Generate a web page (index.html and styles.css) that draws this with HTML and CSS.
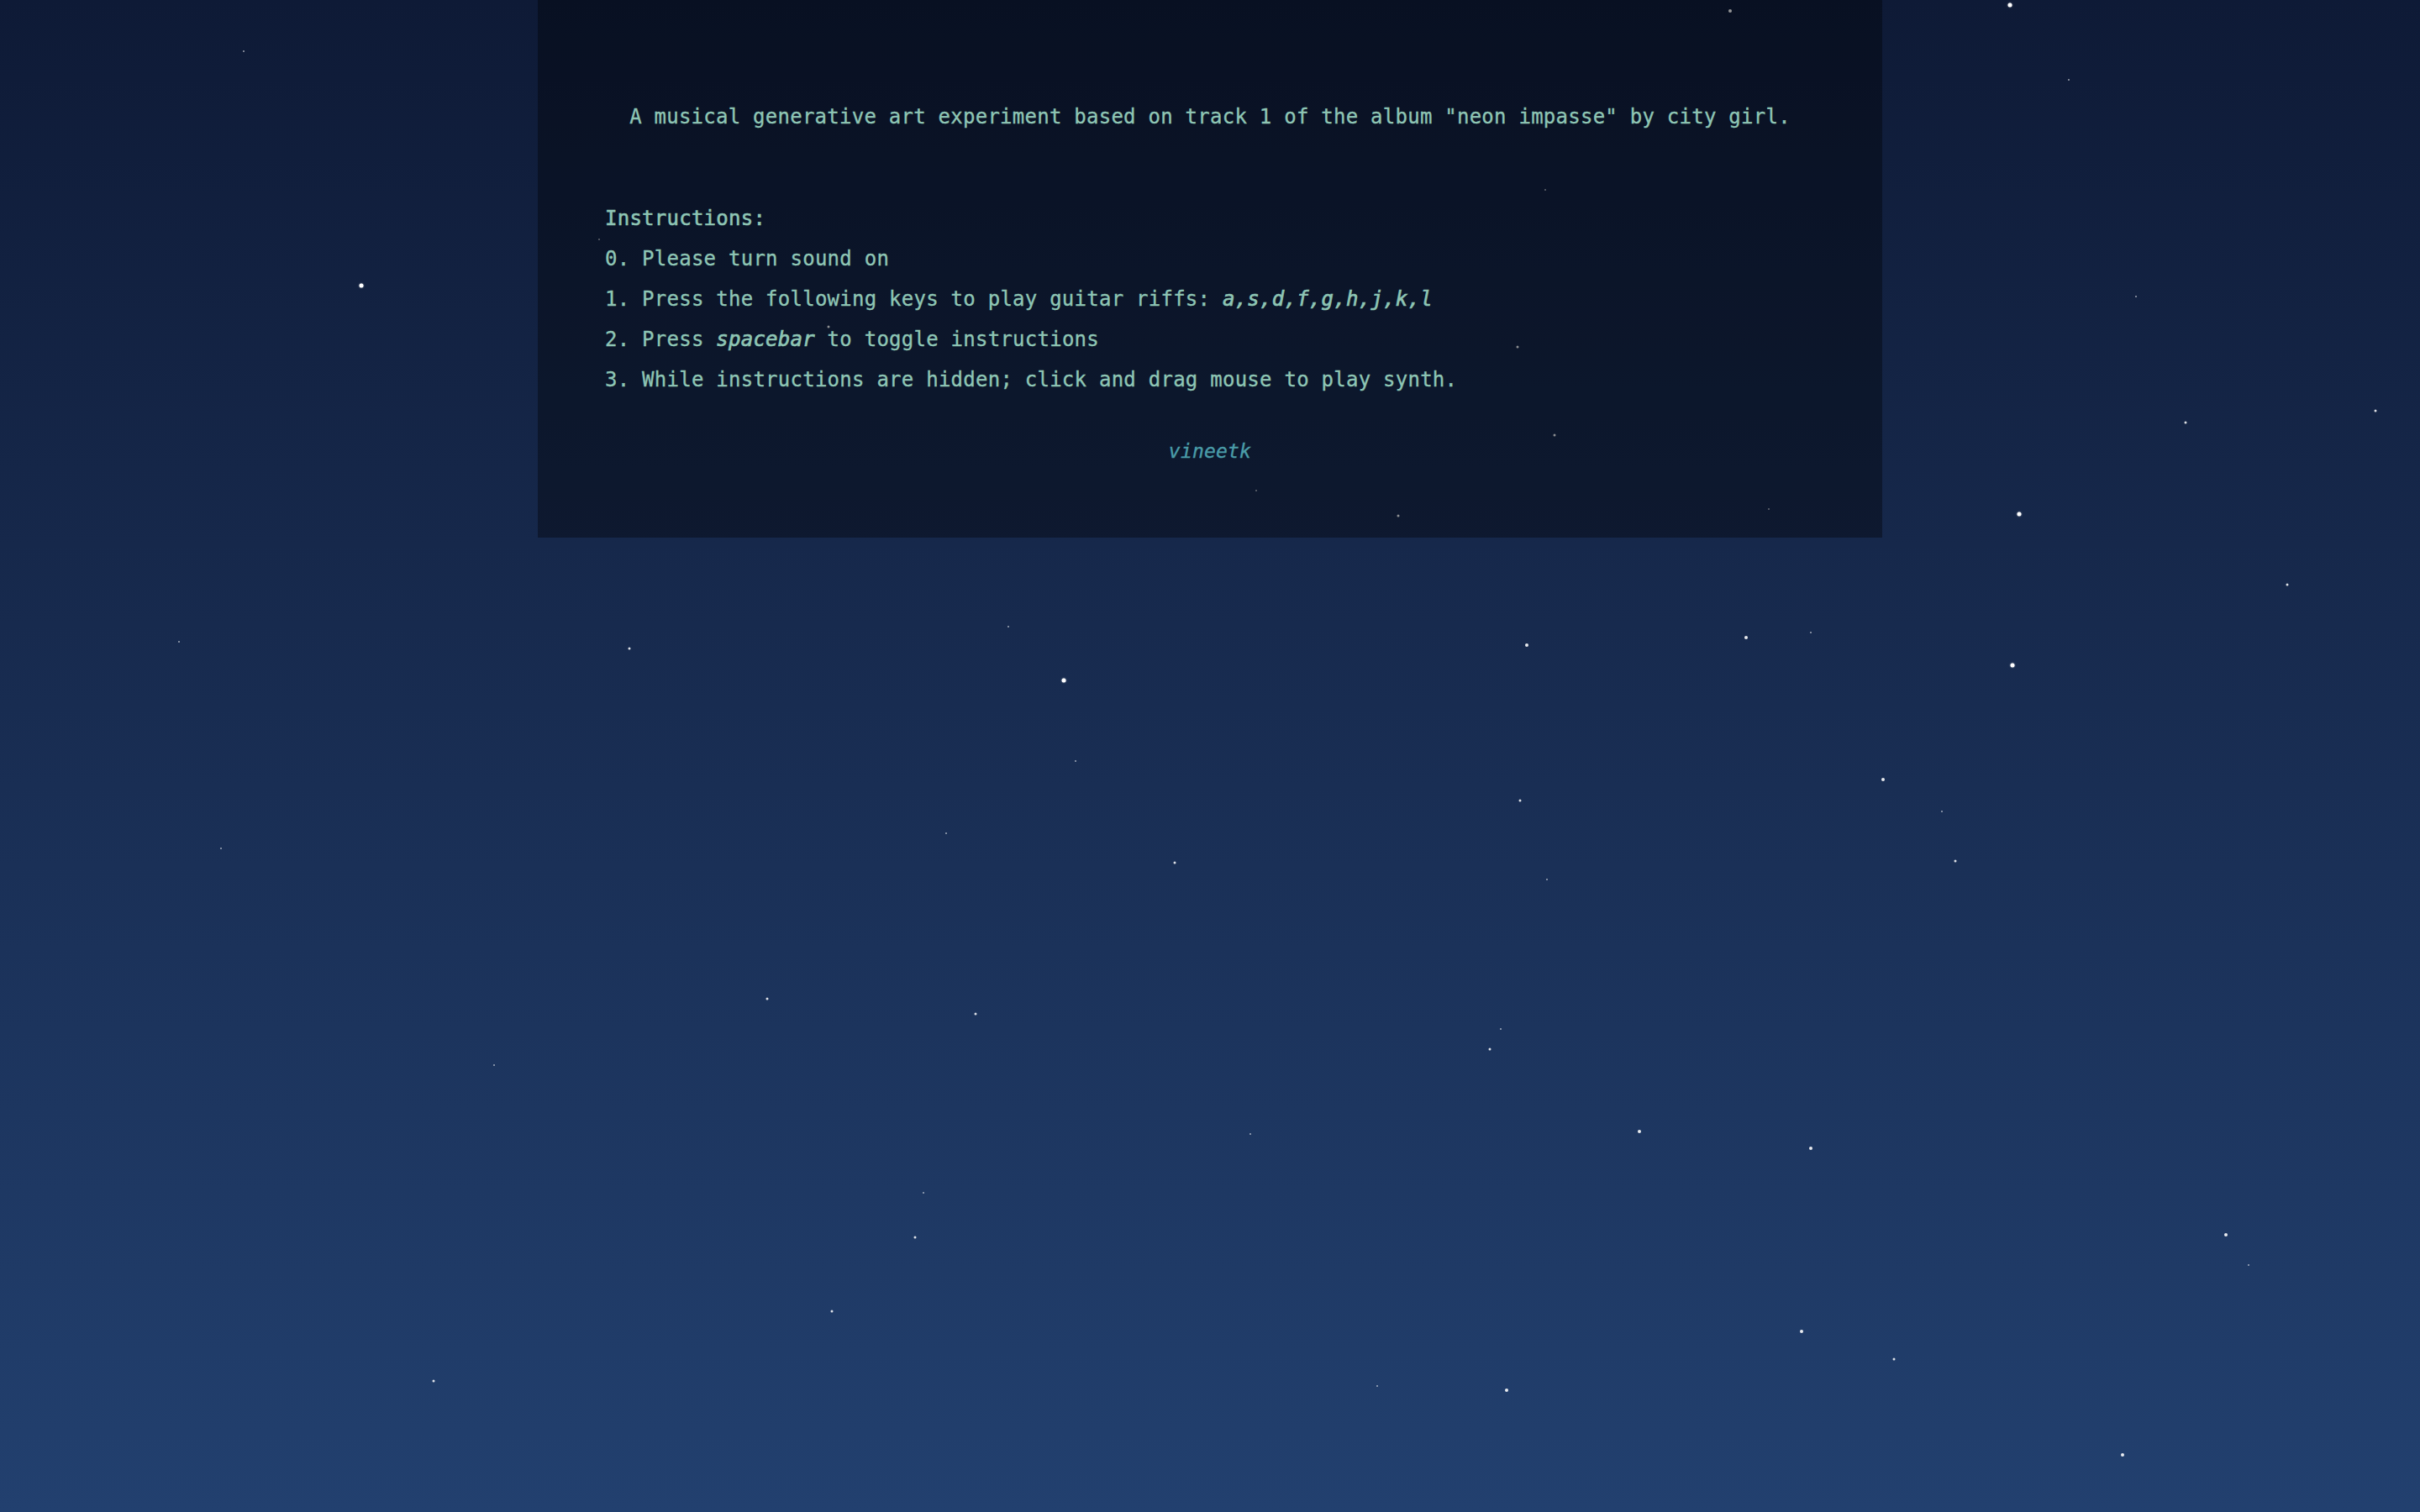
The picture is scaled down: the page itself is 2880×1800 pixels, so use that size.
FILE: index.html
```html
<!DOCTYPE html>
<html lang="en">
<head>
<meta charset="utf-8">
<title>neon impasse</title>
<link rel="stylesheet" href="styles.css">
</head>
<body>
<div class="sky">
  <span class="star t" style="left:290px;top:61px"></span>
  <span class="star b" style="left:430px;top:340px"></span>
  <span class="star m" style="left:2059px;top:13px"></span>
  <span class="star b" style="left:2392px;top:6px"></span>
  <span class="star t" style="left:2462px;top:95px"></span>
  <span class="star t" style="left:1839px;top:226px"></span>
  <span class="star t" style="left:713px;top:285px"></span>
  <span class="star s" style="left:986px;top:389px"></span>
  <span class="star s" style="left:1806px;top:413px"></span>
  <span class="star t" style="left:2542px;top:353px"></span>
  <span class="star s" style="left:1850px;top:518px"></span>
  <span class="star s" style="left:2601px;top:503px"></span>
  <span class="star s" style="left:2827px;top:489px"></span>
  <span class="star b" style="left:2403px;top:612px"></span>
  <span class="star s" style="left:1664px;top:614px"></span>
  <span class="star t" style="left:1495px;top:584px"></span>
  <span class="star t" style="left:2105px;top:606px"></span>
  <span class="star s" style="left:2722px;top:696px"></span>
  <span class="star t" style="left:213px;top:764px"></span>
  <span class="star s" style="left:749px;top:772px"></span>
  <span class="star t" style="left:1200px;top:746px"></span>
  <span class="star b" style="left:1266px;top:810px"></span>
  <span class="star m" style="left:1817px;top:768px"></span>
  <span class="star m" style="left:2078px;top:759px"></span>
  <span class="star t" style="left:2155px;top:753px"></span>
  <span class="star b" style="left:2395px;top:792px"></span>
  <span class="star t" style="left:1280px;top:906px"></span>
  <span class="star m" style="left:2241px;top:928px"></span>
  <span class="star t" style="left:2311px;top:966px"></span>
  <span class="star s" style="left:1809px;top:953px"></span>
  <span class="star t" style="left:263px;top:1010px"></span>
  <span class="star t" style="left:1126px;top:992px"></span>
  <span class="star s" style="left:1398px;top:1027px"></span>
  <span class="star s" style="left:2327px;top:1025px"></span>
  <span class="star t" style="left:1841px;top:1047px"></span>
  <span class="star s" style="left:913px;top:1189px"></span>
  <span class="star s" style="left:1161px;top:1207px"></span>
  <span class="star t" style="left:1786px;top:1225px"></span>
  <span class="star s" style="left:1773px;top:1249px"></span>
  <span class="star t" style="left:588px;top:1268px"></span>
  <span class="star t" style="left:1488px;top:1350px"></span>
  <span class="star m" style="left:1951px;top:1347px"></span>
  <span class="star m" style="left:2155px;top:1367px"></span>
  <span class="star t" style="left:1099px;top:1420px"></span>
  <span class="star s" style="left:1089px;top:1473px"></span>
  <span class="star m" style="left:2649px;top:1470px"></span>
  <span class="star t" style="left:2676px;top:1506px"></span>
  <span class="star s" style="left:990px;top:1561px"></span>
  <span class="star m" style="left:2144px;top:1585px"></span>
  <span class="star s" style="left:2254px;top:1618px"></span>
  <span class="star s" style="left:516px;top:1644px"></span>
  <span class="star t" style="left:1639px;top:1650px"></span>
  <span class="star m" style="left:1793px;top:1655px"></span>
  <span class="star m" style="left:2526px;top:1732px"></span>
</div>
<main class="panel">
  <p class="desc">A musical generative art experiment based on track 1 of the album "neon impasse" by city girl.</p>
  <div class="instructions">
    <div class="heading">Instructions:</div>
    <div class="step">0. Please turn sound on</div>
    <div class="step">1. Press the following keys to play guitar riffs: <em>a,s,d,f,g,h,j,k,l</em></div>
    <div class="step">2. Press <em>spacebar</em> to toggle instructions</div>
    <div class="step">3. While instructions are hidden; click and drag mouse to play synth.</div>
  </div>
  <div class="credit">vineetk</div>
</main>
</body>
</html>
```
FILE: styles.css
```css
html, body {
  margin: 0;
  padding: 0;
}
body {
  width: 2880px;
  height: 1800px;
  overflow: hidden;
  position: relative;
  background: linear-gradient(180deg, #0e1a36 0%, #16284b 36%, #22406f 100%);
  font-family: "DejaVu Sans Mono", "Liberation Mono", monospace;
  color: #8ec5b4;
}
.sky {
  position: absolute;
  inset: 0;
  z-index: 0;
}
.star {
  position: absolute;
  border-radius: 50%;
  background: #ffffff;
  transform: translate(-50%, -50%);
}
.star.b { width: 5px; height: 5px; box-shadow: 0 0 2px rgba(255,255,255,0.6); }
.star.m { width: 4px; height: 4px; opacity: 0.9; }
.star.s { width: 3px; height: 3px; opacity: 0.85; }
.star.t { width: 2px; height: 2px; opacity: 0.6; }

.panel {
  position: relative;
  z-index: 1;
  width: 1600px;
  height: 640px;
  margin: 0 auto;
  box-sizing: border-box;
  padding: 115px 80px 0;
  background: rgba(0, 0, 0, 0.36);
  font-size: 24px;
  letter-spacing: 0.25px;
  line-height: 48px;
  -webkit-text-stroke: 0.35px currentColor;
}
.desc {
  margin: 0;
  text-align: center;
}
.instructions {
  margin-top: 73px;
}
.heading {
  -webkit-text-stroke: 0.6px currentColor;
}
.step em {
  font-style: italic;
  font-weight: normal;
  -webkit-text-stroke: 0.7px currentColor;
}
.credit {
  margin-top: 37px;
  text-align: center;
  font-style: italic;
  font-size: 23px;
  letter-spacing: 0.2px;
  color: #4a9ca8;
}
```
